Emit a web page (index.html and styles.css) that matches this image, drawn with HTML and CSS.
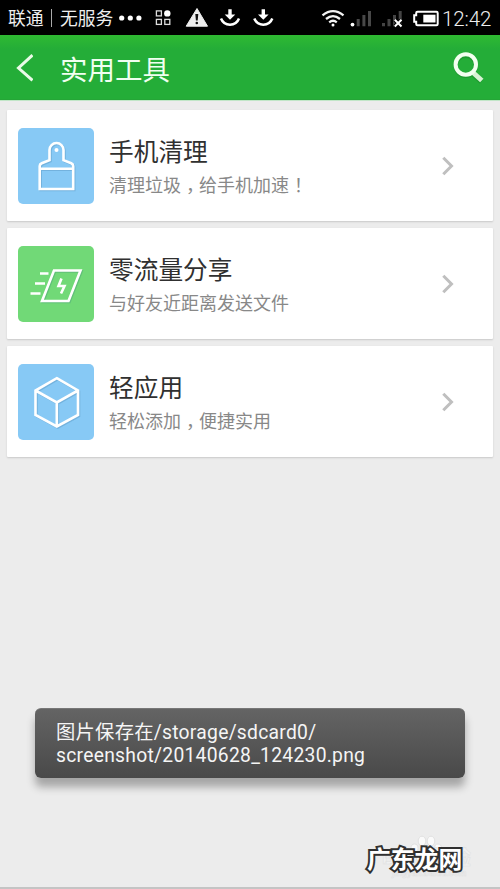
FILE: index.html
```html
<!DOCTYPE html>
<html lang="zh-CN">
<head>
<meta charset="utf-8">
<title>实用工具</title>
<link rel="stylesheet" href="styles.css">
</head>
<body>
<div class="screen">
  <div class="status">
    <span class="carrier">联通</span><span class="divider"></span><span class="service">无服务</span>
    <svg class="left-icons" width="156" height="35" viewBox="118 0 156 35" fill="none">
      <g fill="#fff"><circle cx="121.700" cy="18" r="2.600"/><circle cx="130.300" cy="18" r="2.600"/><circle cx="138.900" cy="18" r="2.600"/></g>
      <g stroke="#ddd" stroke-width="1.300"><rect x="156.400" y="10.900" width="5" height="5"/><rect x="156.400" y="19.400" width="5" height="5"/><rect x="164.800" y="19.400" width="5" height="5"/></g>
      <circle cx="167.300" cy="13.400" r="3.200" fill="#fff"/>
      <path d="M197 8.500 207.500 26.200H186.200Z" fill="#eee" stroke="#eee" stroke-linejoin="round"/>
      <path d="M195.300 14h3l-.6 6.500h-1.800z" fill="#111"/><circle cx="196.800" cy="23" r="1.300" fill="#111"/>
      <g id="download"><path d="M228.300 9.200h3.400v5.300h3.600l-5.300 5.300-5.300-5.300h3.600z" fill="#fff"/><path d="M221 18.500c3.200 8.200 14.800 8.200 18 0" stroke="#fff" stroke-width="2.500"/></g>
      <use href="#download" x="33.300"/>
    </svg>
    <svg class="right-icons" width="120" height="35" viewBox="320 0 120 35" fill="none">
      <g stroke="#f4f4f4" stroke-width="2.300"><path d="M322.500 15.300q10.500-8.400 21 0M326 19q7-5.800 14 0M329.200 22.300q3.800-3 7.600 0"/></g>
      <circle cx="333" cy="25" r="1.500" fill="#fff"/>
      <circle cx="352.500" cy="24.600" r="1.900" fill="#fff"/>
      <path d="M356.700 19h3v7.300h-3zM362.400 15h3v11.300h-3zM368 11h3v15.300h-3z" fill="#484848"/>
      <path d="M382 23h3v3.300h-3zM387.500 19h3v7.300h-3zM393 15h3v11.300h-3zM398.700 11h3v15.300h-3z" fill="#444"/>
      <path d="m394.800 19.800 6.700 6.700m0-6.700-6.700 6.700" stroke="#000" stroke-width="4"/>
      <path d="m394.800 19.800 6.700 6.700m0-6.700-6.700 6.700" stroke="#fff" stroke-width="2"/>
      <path d="M417.500 11.800h19q1.200 0 1.200 1.200v11q0 1.200-1.200 1.200h-19q-1.300 0-1.300-1.300v-2.200h-2v-6.500h2V13q0-1.200 1.300-1.200Z" stroke="#fff" stroke-width="2"/>
      <path d="M423.300 14.700h12.200v7.800h-12.200z" fill="#fff"/>
    </svg>
    <time class="clock">12:42</time>
  </div>
  <header class="header">
    <svg class="back" width="18" height="28" viewBox="0 0 18 28"><path d="M17.500 1.200 3.500 14l14 12.400" fill="none" stroke="#eafbe8" stroke-width="3"/></svg>
    <h1 class="title">实用工具</h1>
    <svg class="search" width="34" height="34" viewBox="0 0 34 34" fill="none"><g stroke="#188928" opacity=".5" transform="translate(0 1)"><circle cx="14.800" cy="15" r="10" stroke-width="4"/><path d="m22.500 23.500 8 7" stroke-width="5"/></g><path d="m22.500 23 8.300 7.500" stroke="#d9f2d5" stroke-width="5"/><circle cx="14.800" cy="14.500" r="10.200" stroke="#f2fff0" stroke-width="4"/></svg>
  </header>
  <main class="list">
    <section class="card">
      <svg class="tile blue" width="76" height="76" viewBox="0 0 76 76"><path d="M21.700 61V38q0-1.800 2-2.700l7.800-3.200V22a7 7 0 0 1 14 0v10.100l7.700 3.200q2 .9 2 2.700v23ZM21.700 40.800h33.500" class="shade"/><path d="M21.700 61V38q0-1.800 2-2.700l7.800-3.200V22a7 7 0 0 1 14 0v10.100l7.700 3.200q2 .9 2 2.700v23ZM21.700 40.800h33.500" class="line"/><circle cx="38.500" cy="22" r="2" fill="#fff"/></svg>
      <div class="copy"><h2>手机清理</h2><p>清理垃圾<span class="punct">，</span>给手机加速<span class="punct">！</span></p></div>
      <svg class="arrow" width="14" height="22" viewBox="0 0 14 22"><path d="m2.300 2.700 8.200 8.300-8.200 8.300"/></svg>
    </section>
    <section class="card">
      <svg class="tile green" width="76" height="76" viewBox="0 0 76 76"><path d="M36 24.500H62.500L50.500 55H24Z" class="shade"/><path d="M36 24.500H62.500L50.500 55H24Z" class="line"/><path d="M22 27.500h8.500M17 37.500h10M12.500 47.500h10" class="line"/><path d="m43.500 32.500-3 7.500h6L43 47.500" class="line"/></svg>
      <div class="copy"><h2>零流量分享</h2><p>与好友近距离发送文件</p></div>
      <svg class="arrow" width="14" height="22" viewBox="0 0 14 22"><path d="m2.300 2.700 8.200 8.300-8.200 8.300"/></svg>
    </section>
    <section class="card">
      <svg class="tile blue" width="76" height="76" viewBox="0 0 76 76"><path d="m38.800 14.200 21.200 12.300v24.500L38.800 62.500 17.500 51V26.500ZM17.500 26.500l21.300 12 21.200-12M38.800 38.500v24" class="shade"/><path d="m38.800 14.200 21.200 12.300v24.500L38.800 62.500 17.500 51V26.500ZM17.500 26.500l21.300 12 21.200-12M38.800 38.500v24" class="line"/></svg>
      <div class="copy"><h2>轻应用</h2><p>轻松添加<span class="punct">，</span>便捷实用</p></div>
      <svg class="arrow" width="14" height="22" viewBox="0 0 14 22"><path d="m2.300 2.700 8.200 8.300-8.200 8.300"/></svg>
    </section>
  </main>
  <div class="toast">图片保存在/storage/sdcard0/<br>screenshot/20140628_124230.png</div>
  <div class="watermark">
    <svg class="stamp" width="112" height="50" viewBox="0 0 112 50"><g fill="#fafafa" stroke="#dcdcdc" stroke-width=".8"><ellipse cx="44" cy="8" rx="3.800" ry="4.800"/><ellipse cx="53" cy="8" rx="3.800" ry="4.800"/><ellipse cx="36.500" cy="15.500" rx="3.500" ry="4.500"/><ellipse cx="60" cy="15.500" rx="3.500" ry="4.500"/><path d="M48.500 14c5 0 10 7 10 12 0 6-20 6-20 0 0-5 5-12 10-12Z"/></g><text x="4" y="31" class="faint">Bai</text><text x="53" y="32" class="faint">经验</text><text x="14" y="43" class="faint small">jingyan.baidu.com</text></svg>
    <span class="mark">广东龙网</span>
  </div>
</div>
</body>
</html>
```
FILE: styles.css
```css
* { box-sizing: border-box; }
body { margin: 0; font-family: Roboto, "Noto Sans CJK SC", sans-serif; }
h1, h2, p { margin: 0; font-weight: 400; }
svg { display: block; flex: none; }
.screen { position: relative; width: 500px; height: 889px; overflow: hidden; background: #ececec; border-bottom: 2px solid #c4c4c4; }
.status { display: flex; align-items: center; height: 35px; padding-left: 8px; background: #000; color: #eee; font-size: 17.8px; line-height: 35px; white-space: nowrap; }
.carrier { width: 36px; padding-top: 1px; }
.divider { width: 1px; height: 18px; margin: 0 8px 0 7px; background: #aaa; }
.service { width: 58px; padding-top: 1px; }
.right-icons { margin-left: 46px; }
.clock { margin: 3px 0 0 2px; font-size: 20.5px; font-weight: 300; letter-spacing: -.1px; }
.header { display: flex; align-items: center; height: 65px; padding: 0 15px; background: linear-gradient(#2fba32, #24ad38 14px); border-bottom: 1px solid #25a637; color: #f0fff0; }
.back { margin-top: 1px; }
.title { margin-left: 27px; padding-top: 7px; font-size: 27.5px; line-height: 40px; }
.search { margin-left: auto; }
.list { display: flex; flex-direction: column; gap: 7px; padding: 9px 7px 10px; border-top: 1px solid #c1e6c7; }
.card { display: flex; align-items: center; height: 111px; padding: 0 38px 0 11px; background: #fff; border-radius: 1px; box-shadow: 0 1px 2px #c8c8c8; }
.tile { border-radius: 5px; fill: none; }
.blue { background: #87c9f5; }
.green { background: #71d977; }
.line { stroke: #fff; stroke-width: 2.6; }
.shade { stroke: #235b80; stroke-opacity: .2; stroke-width: 2.6; transform: translate(1px, 1px); }
.copy { flex: 1; margin-left: 15px; padding-top: 6px; }
.copy h2 { color: #303030; font-size: 24.7px; line-height: 34px; }
.copy p { color: #888; font-size: 18px; line-height: 30px; margin-top: 1px; }
.punct { display: inline-block; transform: translateX(5px); }
.arrow { fill: none; stroke: #bfbfbf; stroke-width: 3; }
.toast { position: absolute; left: 35px; top: 708px; width: 430px; height: 70px; padding: 12px 21px; border-radius: 6px; background: linear-gradient(#646464, #494949); border-top: 1px solid #777; box-shadow: 0 9px 9px rgba(0, 0, 0, .3); color: #f5f5f5; font-size: 19.3px; letter-spacing: .27px; line-height: 23px; white-space: nowrap; }
.watermark { position: absolute; left: 364px; top: 833px; width: 112px; height: 50px; }
.stamp { position: absolute; left: 14px; top: 0; }
.faint { fill: #f0f0f0; stroke: #e0e0e0; stroke-width: .5; font-size: 20px; font-weight: 700; }
.small { font-size: 9px; }
.mark { position: absolute; left: 3px; top: 10px; color: #fff; font-size: 23.8px; font-weight: 700; line-height: 34px; white-space: nowrap; -webkit-text-stroke: 4px #303030; paint-order: stroke fill; }
```
